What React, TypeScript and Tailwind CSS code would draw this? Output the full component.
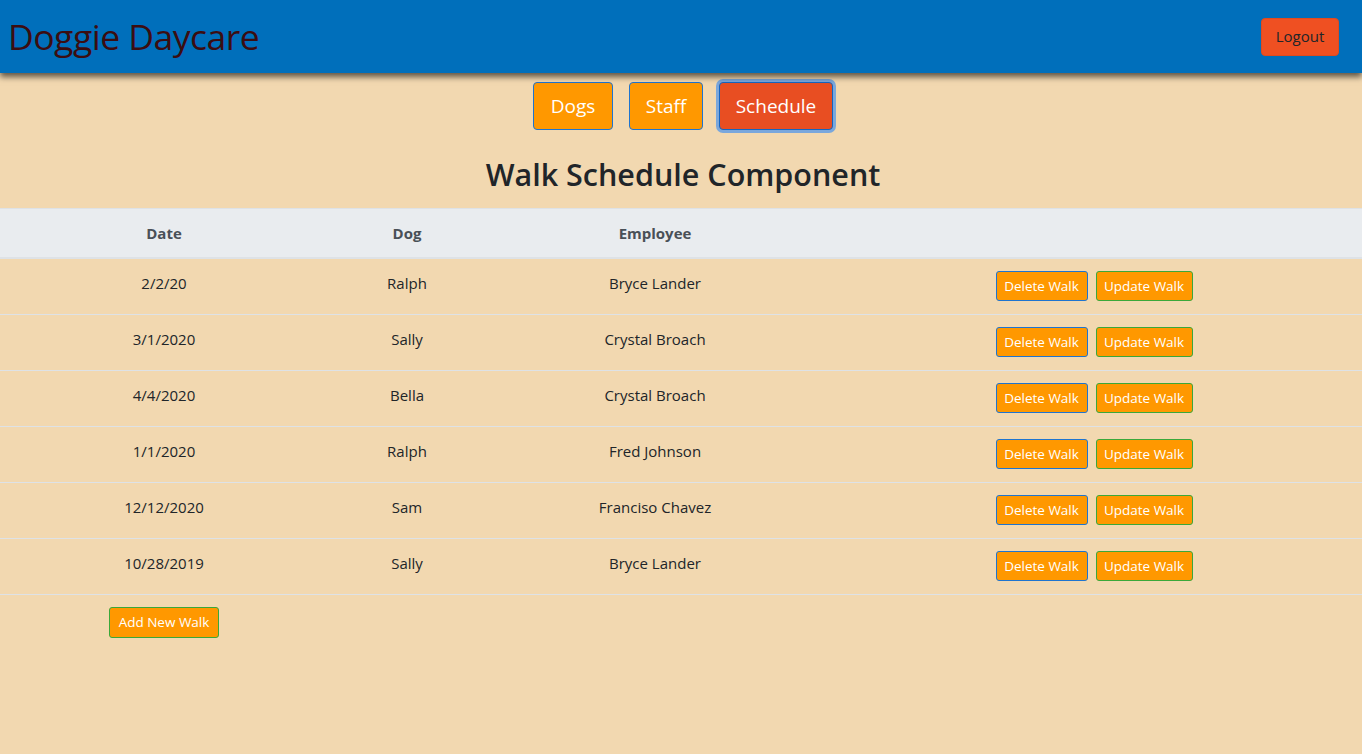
import { useState } from 'react';

interface Walk {
  date: string;
  dog: string;
  employee: string;
}

const walks: Walk[] = [
  { date: '2/2/20', dog: 'Ralph', employee: 'Bryce Lander' },
  { date: '3/1/2020', dog: 'Sally', employee: 'Crystal Broach' },
  { date: '4/4/2020', dog: 'Bella', employee: 'Crystal Broach' },
  { date: '1/1/2020', dog: 'Ralph', employee: 'Fred Johnson' },
  { date: '12/12/2020', dog: 'Sam', employee: 'Franciso Chavez' },
  { date: '10/28/2019', dog: 'Sally', employee: 'Bryce Lander' },
];

type Tab = 'dogs' | 'staff' | 'schedule';

export default function App() {
  const [tab, setTab] = useState<Tab>('schedule');

  const navBtn = (key: Tab) =>
    key === tab
      ? 'bg-[#e84e22] border-[#1565c0] ring-[3px] ring-[#7aa7dc]'
      : 'bg-[#ff9800] border-[#1e74d0]';

  return (
    <div className="min-h-[754px] bg-[#f2d8b0] font-['Open_Sans',sans-serif] text-[#212529]">
      <header className="h-[73px] bg-[#006fbb] flex items-center justify-between pl-2 pr-[23px] shadow-[0_4px_6px_rgba(0,0,0,0.6)] relative">
        <h1 className="text-[35.5px] leading-none text-[#3b0d11] tracking-[-0.5px]">Doggie Daycare</h1>
        <button className="h-[38px] w-[78px] rounded bg-[#ef5022] border border-[#e04a1e] text-[15px] font-medium text-[#212529]">
          Logout
        </button>
      </header>

      <nav className="flex justify-center gap-4 pt-[9px] pl-1">
        <button
          onClick={() => setTab('dogs')}
          className={`h-12 w-20 rounded border text-[19px] text-white ${navBtn('dogs')}`}
        >
          Dogs
        </button>
        <button
          onClick={() => setTab('staff')}
          className={`h-12 w-[74px] rounded border text-[19px] text-white ${navBtn('staff')}`}
        >
          Staff
        </button>
        <button
          onClick={() => setTab('schedule')}
          className={`h-12 w-[114px] rounded border text-[19px] text-white ${navBtn('schedule')}`}
        >
          Schedule
        </button>
      </nav>

      <h2 className="text-center text-[30.5px] font-semibold leading-none mt-[29px] mb-[18px] pl-1">
        Walk Schedule Component
      </h2>

      <table className="w-full border-collapse text-[15px] text-center">
        <thead>
          <tr className="bg-[#e9ecef] text-[#495057] border-t border-[#dee2e6] border-b-2">
            <th className="w-[328px] h-[50px] font-bold">Date</th>
            <th className="w-[158px] font-bold">Dog</th>
            <th className="w-[338px] font-bold">Employee</th>
            <th></th>
          </tr>
        </thead>
        <tbody>
          {walks.map((w, i) => (
            <tr key={i} className="border-b border-[#dee2e6] h-14">
              <td className="pb-[6px]">{w.date}</td>
              <td className="pb-[6px]">{w.dog}</td>
              <td className="pb-[6px]">{w.employee}</td>
              <td>
                <div className="flex justify-center gap-2 pl-[2px]">
                  <button className="h-[30px] w-[92px] rounded-[3px] bg-[#ff9800] border border-[#1e74d0] text-[13.5px] text-white">
                    Delete Walk
                  </button>
                  <button className="h-[30px] w-[97px] rounded-[3px] bg-[#ff9800] border border-[#3aa83a] text-[13.5px] text-white">
                    Update Walk
                  </button>
                </div>
              </td>
            </tr>
          ))}
          <tr>
            <td className="pt-[12px]">
              <button className="h-[31px] w-[110px] rounded-[3px] bg-[#ff9800] border border-[#3aa83a] text-[13.5px] text-white">
                Add New Walk
              </button>
            </td>
            <td></td>
            <td></td>
            <td></td>
          </tr>
        </tbody>
      </table>
    </div>
  );
}
